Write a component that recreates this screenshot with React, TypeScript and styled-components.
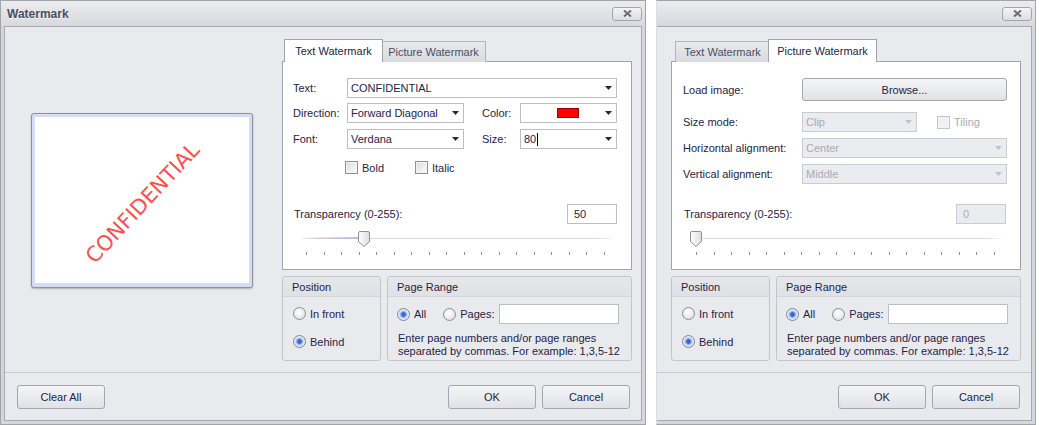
import React from "react";
import styled, { createGlobalStyle, css } from "styled-components";

const GlobalStyle = createGlobalStyle`
  html, body { margin: 0; padding: 0; background: #ffffff; }
  body {
    font-family: "Liberation Sans", Arial, sans-serif;
    font-size: 11px;
    color: #1f2347;
  }
  * { box-sizing: border-box; }
`;

const Screen = styled.div`
  display: flex;
  gap: 10px;
  width: 1039px;
  height: 425px;
  overflow: hidden;
  background: #ffffff;
`;

const Frame = styled.div<{ $w: number; $cropped?: boolean }>`
  width: ${(p) => p.$w}px;
  height: 425px;
  flex: none;
  display: flex;
  flex-direction: column;
  background: #d6d7dc;
  border: 1px solid #a2a4ab;
  padding: 0 3px 3px 3px;
  ${(p) =>
    p.$cropped &&
    css`
      border-left-color: #dcdde2;
      padding-left: 0;
    `}
`;

const TitleBar = styled.div<{ $cropped?: boolean }>`
  height: 25px;
  flex: none;
  display: flex;
  align-items: center;
  justify-content: space-between;
  margin: 0 -3px 0 ${(p) => (p.$cropped ? 0 : -3)}px;
  padding: 0 3px 0 6px;
  background: linear-gradient(#ececef, #d8d9de);
`;

const TitleText = styled.div`
  font-size: 12px;
  font-weight: bold;
  color: #4a4d62;
  text-shadow: 0 1px 0 rgba(255, 255, 255, 0.7);
`;

const CloseButton = styled.div`
  width: 30px;
  height: 14px;
  border: 1px solid #a3a5ac;
  border-radius: 3px;
  background: linear-gradient(#f4f4f6, #dddee2);
  display: flex;
  align-items: center;
  justify-content: center;
`;

const Body = styled.div<{ $cropped?: boolean }>`
  flex: 1;
  display: flex;
  flex-direction: column;
  background: #e9eaee;
  border: 1px solid #a8aab1;
  ${(p) =>
    p.$cropped &&
    css`
      border-left: none;
    `}
`;

const TopSection = styled.div`
  flex: 1;
  display: flex;
`;

const PreviewColumn = styled.div<{ $w: number; $empty?: boolean }>`
  width: ${(p) => p.$w}px;
  flex: none;
  padding: ${(p) => (p.$empty ? "0" : "86px 0 0 26px")};
`;

const Page = styled.div`
  width: 222px;
  height: 175px;
  border: 1px solid #8f9198;
  border-radius: 3px;
  padding: 3px 3px 4px 3px;
  background: #d5dcf5;
  box-shadow: 0 1px 2px rgba(0, 0, 0, 0.25);
`;

const PageInner = styled.div`
  width: 100%;
  height: 100%;
  background: #ffffff;
  display: flex;
  align-items: center;
  justify-content: center;
  overflow: hidden;
`;

const WatermarkText = styled.div`
  font-family: "DejaVu Sans", Verdana, sans-serif;
  font-size: 21px;
  color: #ff4d4d;
  white-space: nowrap;
  transform: rotate(-47deg);
  margin-left: 2px;
  margin-top: 6px;
`;

const MainColumn = styled.div`
  width: 350px;
  flex: none;
  padding-top: 12px;
  display: flex;
  flex-direction: column;
`;

const TabStrip = styled.div`
  height: 23px;
  display: flex;
  align-items: flex-start;
  padding-left: 4px;
  margin-bottom: -1px;
  position: relative;
  z-index: 1;
`;

const Tab = styled.div<{ $active?: boolean; $w: number }>`
  width: ${(p) => p.$w}px;
  height: 21px;
  margin-top: 2px;
  display: flex;
  align-items: center;
  justify-content: center;
  border: 1px solid #b2b4ba;
  border-bottom: none;
  background: linear-gradient(#e8e9ed, #dadbe0);
  color: #4b4e60;
  ${(p) =>
    p.$active &&
    css`
      width: ${p.$w + 4}px;
      height: 23px;
      margin: 0 -2px;
      background: #ffffff;
      border-color: #a2a4ab;
      color: #1f2347;
      position: relative;
      z-index: 2;
    `}
`;

const Panel = styled.div<{ $padL: number }>`
  height: 209px;
  background: #ffffff;
  border: 1px solid #a2a4ab;
  padding: 16px 14px 0 ${(p) => p.$padL}px;
  display: flex;
  flex-direction: column;
`;

const FieldRow = styled.div<{ $mt?: number; $h?: number }>`
  display: flex;
  align-items: center;
  height: ${(p) => p.$h ?? 20}px;
  margin-top: ${(p) => p.$mt ?? 0}px;
`;

const FieldLabel = styled.div<{ $w: number; $ml?: number }>`
  width: ${(p) => p.$w}px;
  margin-left: ${(p) => p.$ml ?? 0}px;
  flex: none;
  white-space: nowrap;
`;

const ComboBox = styled.div<{ $w: number; $disabled?: boolean }>`
  width: ${(p) => p.$w}px;
  height: 20px;
  flex: none;
  display: flex;
  align-items: center;
  background: #ffffff;
  border: 1px solid #bcbec4;
  padding: 0 4px 0 3px;
  ${(p) =>
    p.$disabled &&
    css`
      background: #ebecef;
      border-color: #cbccd1;
      color: #a9aab1;
    `}
`;

const ComboValue = styled.div<{ $center?: boolean }>`
  flex: 1;
  display: flex;
  align-items: center;
  justify-content: ${(p) => (p.$center ? "center" : "flex-start")};
  white-space: nowrap;
  overflow: hidden;
`;

const Caret = styled.span`
  display: inline-block;
  width: 1px;
  height: 13px;
  background: #000;
  margin-left: 1px;
`;

const Swatch = styled.div`
  width: 22px;
  height: 10px;
  background: #ff0000;
  border: 1px solid #9c0000;
  margin-left: 8px;
`;

const ArrowBox = styled.div`
  width: 8px;
  display: flex;
  align-items: center;
  justify-content: flex-end;
`;

const CheckRow = styled.div<{ $pl: number; $mt: number }>`
  display: flex;
  align-items: center;
  height: 13px;
  margin-top: ${(p) => p.$mt}px;
  padding-left: ${(p) => p.$pl}px;
`;

const CheckItem = styled.div<{ $w?: number; $disabled?: boolean; $ml?: number }>`
  display: flex;
  align-items: center;
  gap: 4px;
  width: ${(p) => (p.$w ? `${p.$w}px` : "auto")};
  margin-left: ${(p) => p.$ml ?? 0}px;
  flex: none;
  color: ${(p) => (p.$disabled ? "#a9aab1" : "inherit")};
`;

const CheckBox = styled.div<{ $disabled?: boolean }>`
  width: 13px;
  height: 13px;
  flex: none;
  border: 1px solid #8e9097;
  background: linear-gradient(135deg, #d9dade, #ffffff);
  box-shadow: inset 0 0 0 1px #f4f4f6;
  ${(p) =>
    p.$disabled &&
    css`
      border-color: #c4c5cb;
      background: #f0f0f3;
    `}
`;

const Radio = styled.div<{ $checked?: boolean }>`
  width: 13px;
  height: 13px;
  flex: none;
  border-radius: 50%;
  border: 1px solid #8b8d95;
  background: radial-gradient(circle at 45% 40%, #ffffff 0, #f2f2f4 35%, #d7d8dc 100%);
  ${(p) =>
    p.$checked &&
    css`
      border-color: #7d8492;
      background: radial-gradient(
        circle at 50% 50%,
        #2e5bc4 0,
        #4a74d4 2px,
        #a9c1ef 3.2px,
        #dce6fa 4.5px,
        #f0f3fb 6px
      );
    `}
`;

const RadioItem = styled.div<{ $mt?: number; $ml?: number }>`
  display: flex;
  align-items: center;
  gap: 4px;
  height: 13px;
  margin-top: ${(p) => p.$mt ?? 0}px;
  margin-left: ${(p) => p.$ml ?? 0}px;
  white-space: nowrap;
`;

const TextInput = styled.div<{ $w: number; $disabled?: boolean; $push?: boolean }>`
  width: ${(p) => p.$w}px;
  height: 20px;
  flex: none;
  margin-left: ${(p) => (p.$push ? "auto" : "0")};
  border: 1px solid #bcbec4;
  background: #ffffff;
  display: flex;
  align-items: center;
  padding-left: 6px;
  ${(p) =>
    p.$disabled &&
    css`
      background: #ebecef;
      border-color: #cbccd1;
      color: #a9aab1;
    `}
`;

const TransBlock = styled.div`
  margin-top: auto;
  padding-bottom: 11px;
  display: flex;
  flex-direction: column;
`;

const TransRow = styled.div`
  display: flex;
  align-items: center;
  justify-content: space-between;
  height: 20px;
  padding-left: 1px;
`;

const SliderWrap = styled.div`
  position: relative;
  width: 312px;
  height: 28px;
  margin: 6px 0 0 7px;
`;

const Track = styled.div`
  position: absolute;
  left: 0;
  right: 0;
  top: 8px;
  height: 1px;
  background: linear-gradient(
    to right,
    rgba(214, 215, 220, 0.2),
    #d6d7dc 6%,
    #d6d7dc 94%,
    rgba(214, 215, 220, 0.2)
  );
`;

const TrackFill = styled.div`
  position: absolute;
  left: 0;
  top: 7px;
  height: 2px;
  background: linear-gradient(to right, rgba(196, 174, 232, 0), #c4aee8);
`;

const ThumbBox = styled.div`
  position: absolute;
  top: 1px;
  width: 12px;
  height: 16px;
`;

const Ticks = styled.div`
  position: absolute;
  left: 6px;
  right: 7px;
  top: 22px;
  display: flex;
  justify-content: space-between;
`;

const Tick = styled.div`
  width: 1px;
  height: 3px;
  background: #8e9097;
`;

const GroupsRow = styled.div`
  display: grid;
  grid-template-columns: 99px 1fr;
  gap: 6px;
  margin-top: 6px;
  height: 85px;
`;

const GroupBox = styled.div`
  border: 1px solid #c4c5cb;
  border-radius: 3px;
  display: flex;
  flex-direction: column;
  overflow: hidden;
`;

const GroupHeader = styled.div`
  height: 20px;
  flex: none;
  display: flex;
  align-items: center;
  padding-left: 9px;
  background: linear-gradient(#e6e7eb, #e0e1e5);
  border-bottom: 1px solid #d3d4d9;
`;

const GroupBody = styled.div<{ $pt: number; $pl: number }>`
  flex: 1;
  padding: ${(p) => p.$pt}px 12px 0 ${(p) => p.$pl}px;
  display: flex;
  flex-direction: column;
`;

const RangeRow = styled.div`
  display: flex;
  align-items: center;
  height: 20px;
`;

const HelpText = styled.div`
  margin-top: 8px;
  line-height: 13px;
  padding-left: 1px;
  white-space: nowrap;
`;

const Footer = styled.div`
  height: 48px;
  flex: none;
  border-top: 1px solid #c9cacf;
  display: flex;
  align-items: flex-start;
  padding: 12px 11px 0 12px;
  gap: 6px;
`;

const Button = styled.div<{ $w: number; $h?: number; $push?: boolean }>`
  width: ${(p) => p.$w}px;
  height: ${(p) => p.$h ?? 24}px;
  flex: none;
  display: flex;
  align-items: center;
  justify-content: center;
  border: 1px solid #a5a7ae;
  border-radius: 3px;
  background: linear-gradient(#f4f5f7, #e1e2e6);
  margin-left: ${(p) => (p.$push ? "auto" : "0")};
`;

const Arrow: React.FC<{ disabled?: boolean }> = ({ disabled }) => (
  <svg width="7" height="4" viewBox="0 0 7 4">
    <path d="M0 0 H7 L3.5 4 Z" fill={disabled ? "#c2c3c8" : "#2a2a2a"} />
  </svg>
);

const Combo: React.FC<{
  w: number;
  value?: string;
  disabled?: boolean;
  swatch?: boolean;
  caret?: boolean;
}> = ({ w, value, disabled, swatch, caret }) => (
  <ComboBox $w={w} $disabled={disabled}>
    <ComboValue $center={swatch}>
      {swatch ? <Swatch /> : value}
      {caret && <Caret />}
    </ComboValue>
    <ArrowBox>
      <Arrow disabled={disabled} />
    </ArrowBox>
  </ComboBox>
);

const Thumb: React.FC = () => (
  <svg width="12" height="16" viewBox="0 0 12 16">
    <defs>
      <linearGradient id="thumbGrad" x1="0" y1="0" x2="1" y2="0">
        <stop offset="0" stopColor="#ffffff" />
        <stop offset="1" stopColor="#dcdde1" />
      </linearGradient>
    </defs>
    <path
      d="M0.5 2 Q0.5 0.5 2 0.5 H10 Q11.5 0.5 11.5 2 V10.5 L6 15.5 L0.5 10.5 Z"
      fill="url(#thumbGrad)"
      stroke="#8e9098"
      strokeWidth="1"
    />
  </svg>
);

const Slider: React.FC<{ value: number }> = ({ value }) => {
  const span = 298;
  const left = Math.round((value / 255) * span);
  return (
    <SliderWrap>
      <Track />
      {value > 0 && <TrackFill style={{ width: left + 6 }} />}
      <Ticks>
        {Array.from({ length: 18 }).map((_, i) => (
          <Tick key={i} />
        ))}
      </Ticks>
      <ThumbBox style={{ left }}>
        <Thumb />
      </ThumbBox>
    </SliderWrap>
  );
};

const Transparency: React.FC<{ value: number; disabled?: boolean }> = ({
  value,
  disabled,
}) => (
  <TransBlock>
    <TransRow>
      <span>Transparency (0-255):</span>
      <TextInput $w={50} $disabled={disabled}>
        {value}
      </TextInput>
    </TransRow>
    <Slider value={value} />
  </TransBlock>
);

const TextPanel: React.FC = () => (
  <Panel $padL={10}>
    <FieldRow>
      <FieldLabel $w={54}>Text:</FieldLabel>
      <Combo w={270} value="CONFIDENTIAL" />
    </FieldRow>
    <FieldRow $mt={5}>
      <FieldLabel $w={54}>Direction:</FieldLabel>
      <Combo w={117} value="Forward Diagonal" />
      <FieldLabel $w={38} $ml={18}>
        Color:
      </FieldLabel>
      <Combo w={97} swatch />
    </FieldRow>
    <FieldRow $mt={6}>
      <FieldLabel $w={54}>Font:</FieldLabel>
      <Combo w={117} value="Verdana" />
      <FieldLabel $w={38} $ml={18}>
        Size:
      </FieldLabel>
      <Combo w={97} value="80" caret />
    </FieldRow>
    <CheckRow $pl={52} $mt={12}>
      <CheckItem $w={70}>
        <CheckBox />
        Bold
      </CheckItem>
      <CheckItem>
        <CheckBox />
        Italic
      </CheckItem>
    </CheckRow>
    <Transparency value={50} />
  </Panel>
);

const PicturePanel: React.FC = () => (
  <Panel $padL={11}>
    <FieldRow $h={23}>
      <FieldLabel $w={119}>Load image:</FieldLabel>
      <Button $w={205} $h={23}>
        Browse...
      </Button>
    </FieldRow>
    <FieldRow $mt={11}>
      <FieldLabel $w={119}>Size mode:</FieldLabel>
      <Combo w={115} value="Clip" disabled />
      <CheckItem $ml={20} $disabled>
        <CheckBox $disabled />
        Tiling
      </CheckItem>
    </FieldRow>
    <FieldRow $mt={6}>
      <FieldLabel $w={119}>Horizontal alignment:</FieldLabel>
      <Combo w={205} value="Center" disabled />
    </FieldRow>
    <FieldRow $mt={6}>
      <FieldLabel $w={119}>Vertical alignment:</FieldLabel>
      <Combo w={205} value="Middle" disabled />
    </FieldRow>
    <Transparency value={0} disabled />
  </Panel>
);

const Groups: React.FC = () => (
  <GroupsRow>
    <GroupBox>
      <GroupHeader>Position</GroupHeader>
      <GroupBody $pt={10} $pl={10}>
        <RadioItem>
          <Radio />
          In front
        </RadioItem>
        <RadioItem $mt={15}>
          <Radio $checked />
          Behind
        </RadioItem>
      </GroupBody>
    </GroupBox>
    <GroupBox>
      <GroupHeader>Page Range</GroupHeader>
      <GroupBody $pt={7} $pl={9}>
        <RangeRow>
          <RadioItem>
            <Radio $checked />
            All
          </RadioItem>
          <RadioItem $ml={17}>
            <Radio />
            Pages:
          </RadioItem>
          <TextInput $w={120} $push />
        </RangeRow>
        <HelpText>
          Enter page numbers and/or page ranges
          <br />
          separated by commas. For example: 1,3,5-12
        </HelpText>
      </GroupBody>
    </GroupBox>
  </GroupsRow>
);

const CloseGlyph: React.FC = () => (
  <svg width="9" height="7" viewBox="0 0 9 7">
    <path
      d="M1 0.5 L8 6.5 M8 0.5 L1 6.5"
      stroke="#6c6e77"
      strokeWidth="2"
      fill="none"
    />
  </svg>
);

const WatermarkDialog: React.FC<{
  width: number;
  cropped?: boolean;
  tab: "text" | "picture";
}> = ({ width, cropped, tab }) => (
  <Frame $w={width} $cropped={cropped}>
    <TitleBar $cropped={cropped}>
      <TitleText>{cropped ? "" : "Watermark"}</TitleText>
      <CloseButton>
        <CloseGlyph />
      </CloseButton>
    </TitleBar>
    <Body $cropped={cropped}>
      <TopSection>
        <PreviewColumn $w={cropped ? 14 : 277} $empty={cropped}>
          {!cropped && (
            <Page>
              <PageInner>
                <WatermarkText>CONFIDENTIAL</WatermarkText>
              </PageInner>
            </Page>
          )}
        </PreviewColumn>
        <MainColumn>
          <TabStrip>
            <Tab $w={95} $active={tab === "text"}>
              Text Watermark
            </Tab>
            <Tab $w={105} $active={tab === "picture"}>
              Picture Watermark
            </Tab>
          </TabStrip>
          {tab === "text" ? <TextPanel /> : <PicturePanel />}
          <Groups />
        </MainColumn>
      </TopSection>
      <Footer>
        {!cropped && <Button $w={88}>Clear All</Button>}
        <Button $w={88} $push>
          OK
        </Button>
        <Button $w={88}>Cancel</Button>
      </Footer>
    </Body>
  </Frame>
);

export default function App() {
  return (
    <>
      <GlobalStyle />
      <Screen>
        <WatermarkDialog width={646} tab="text" />
        <WatermarkDialog width={380} cropped tab="picture" />
      </Screen>
    </>
  );
}
